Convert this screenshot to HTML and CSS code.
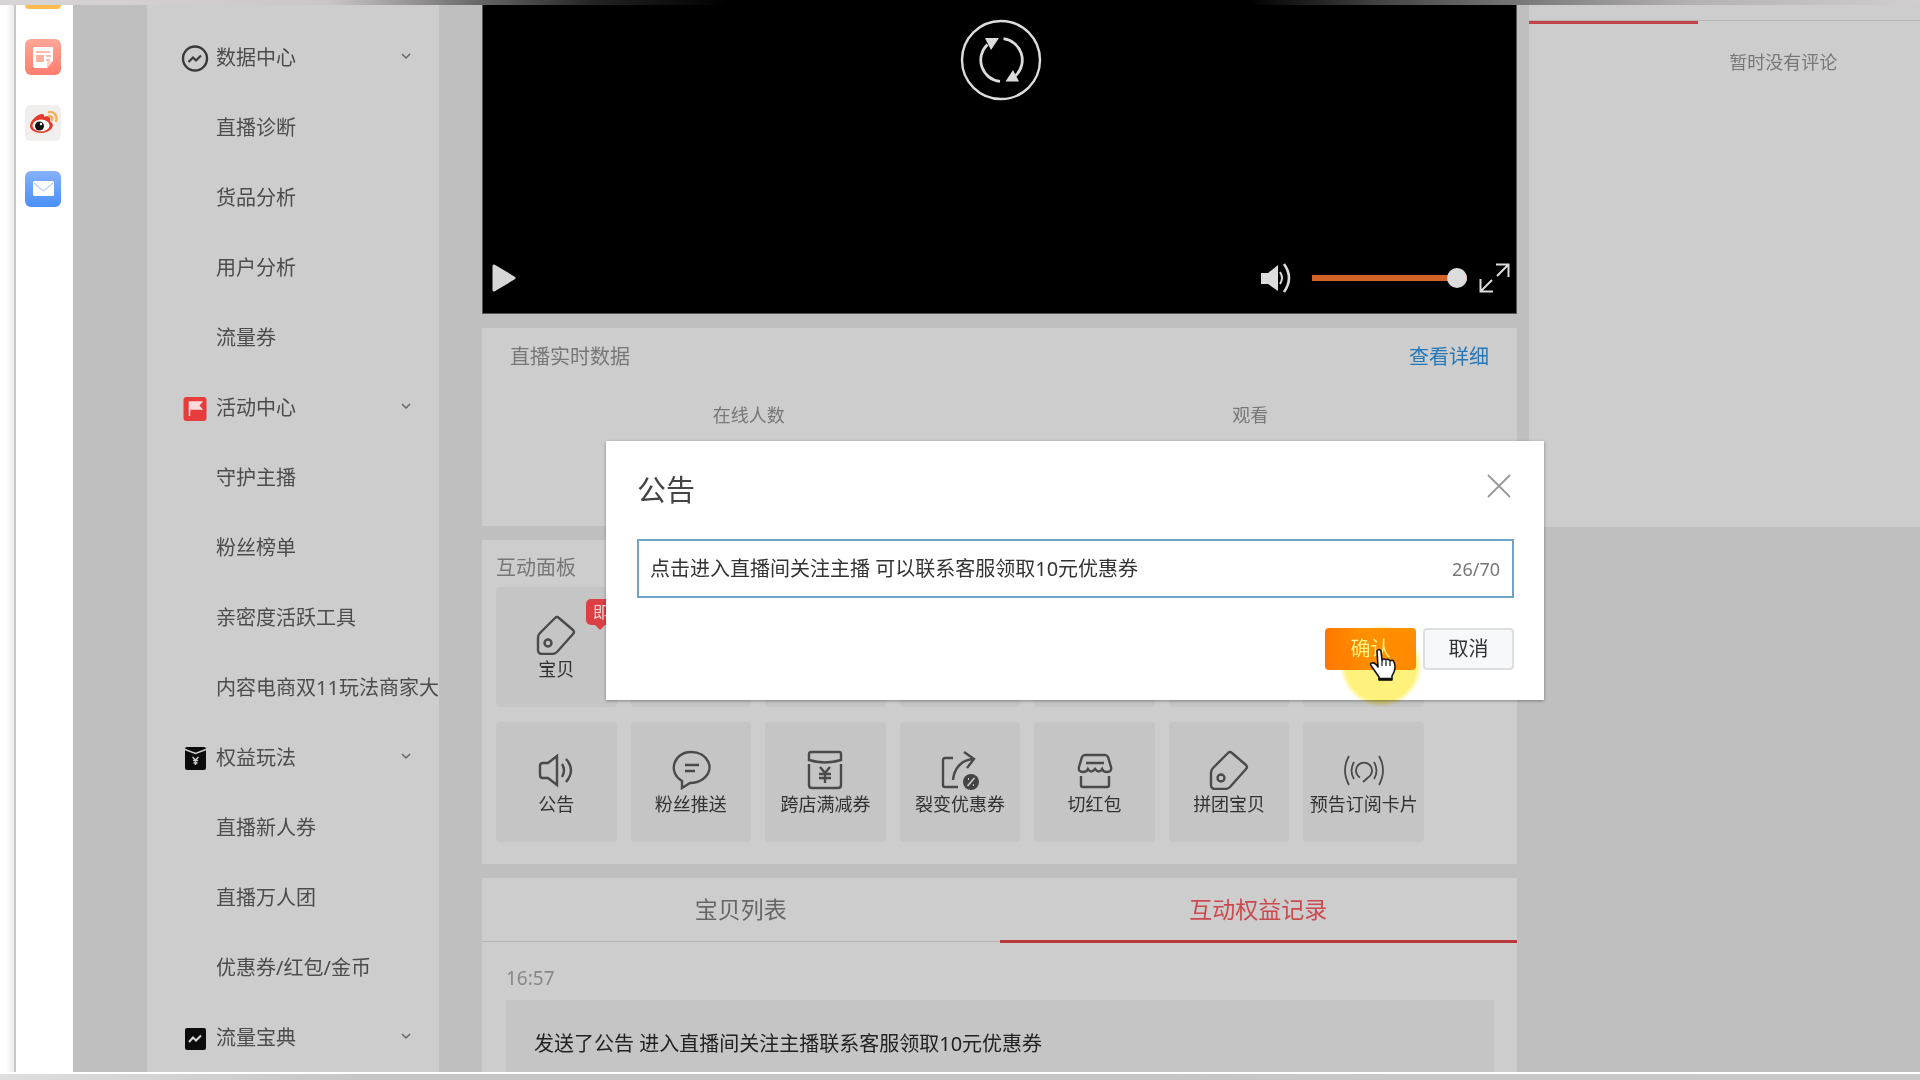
FILE: index.html
```html
<!DOCTYPE html>
<html lang="zh-CN">
<head>
<meta charset="utf-8">
<title>直播中控台</title>
<link rel="stylesheet" href="styles.css">
</head>
<body>
<div class="top-strip"></div>
<div class="shell">
  <div class="window-edge"></div>
  <aside class="rail">
    <a class="app app-cut" href="#" aria-label="应用"></a>
    <a class="app app-news" href="#" aria-label="资讯">
      <svg width="36" height="36" viewBox="0 0 36 36"><path d="M9 8h18q2 0 1 2v12l-6 7H10q-2 0-2-2V9z" fill="#fff"/><path d="M11 13h14M21 17h5M21 21h4" stroke="#ffa193" stroke-width="1.5"/><rect x="11" y="16" width="8" height="7" fill="#ffb0a2"/><path d="M28 22l-6 7v-5q0-2 2-2z" fill="#ffd2c8"/></svg>
    </a>
    <a class="app app-weibo" href="#" aria-label="微博">
      <svg width="36" height="36" viewBox="0 0 36 36"><path d="M5 21c0-5 7-12 12-12 3 0 2 3 2 3s5-2 6 1c1 2-1 3 1 4 5 4-1 11-10 11C10 28 5 25 5 21z" fill="#e43b2b"/><ellipse cx="16" cy="20.500" rx="8.500" ry="6" fill="#fff"/><circle cx="14.500" cy="21" r="4.500" fill="#111"/><circle cx="16" cy="19" r="1.200" fill="#fff"/><path d="M24 7c5-1 9 4 7 9M24 11c3 0 4 2 3 4" fill="none" stroke="#f3b057" stroke-width="2.400" stroke-linecap="round"/></svg>
    </a>
    <a class="app app-mail" href="#" aria-label="邮箱">
      <svg width="36" height="36" viewBox="0 0 36 36"><rect x="8" y="10" width="21" height="15" rx="1.500" fill="#fff"/><path d="M9 12l8 7q1.500 1 3 0l8-7" fill="none" stroke="#bcd3fb" stroke-width="1.500"/></svg>
    </a>
  </aside>
  <div class="workspace">
    <nav class="sidebar">
      <button class="group" type="button">
        <svg class="group-icon" viewBox="0 0 28 28"><circle cx="14" cy="14.500" r="12" fill="none" stroke="#3a3a3a" stroke-width="2.400"/><path d="M7.500 18l4.500-4.500 3 3 5-5" fill="none" stroke="#3a3a3a" stroke-width="2.200"/></svg>
        <span>数据中心</span>
        <svg class="chevron" viewBox="0 0 10 10"><path d="M1 1l4 4 4-4" fill="none" stroke="#666" stroke-width="1.500"/></svg>
      </button>
      <a class="item" href="#">直播诊断</a>
      <a class="item" href="#">货品分析</a>
      <a class="item" href="#">用户分析</a>
      <a class="item" href="#">流量券</a>
      <button class="group" type="button">
        <svg class="group-icon" viewBox="0 0 28 28"><rect x="2.500" y="3" width="23" height="24" rx="3" fill="#e63c3c"/><path d="M8.500 22V8h12l-3 3.500 3 3.500h-11" fill="#f6dcdc" stroke="#f6dcdc" stroke-width="1.500"/></svg>
        <span>活动中心</span>
        <svg class="chevron" viewBox="0 0 10 10"><path d="M1 1l4 4 4-4" fill="none" stroke="#666" stroke-width="1.500"/></svg>
      </button>
      <a class="item" href="#">守护主播</a>
      <a class="item" href="#">粉丝榜单</a>
      <a class="item" href="#">亲密度活跃工具</a>
      <a class="item" href="#">内容电商双11玩法商家大</a>
      <button class="group" type="button">
        <svg class="group-icon" viewBox="0 0 28 28"><rect x="4" y="3" width="21" height="23" rx="2" fill="#0c0c0c"/><path d="M4 5.500l10.500 4 10.500-4" fill="none" stroke="#cdcdcd" stroke-width="1.500"/><path d="M11.500 13l3 3 3-3M14.500 15v6M12 16.500h5M12.500 19h4" fill="none" stroke="#cdcdcd" stroke-width="1.400"/></svg>
        <span>权益玩法</span>
        <svg class="chevron" viewBox="0 0 10 10"><path d="M1 1l4 4 4-4" fill="none" stroke="#666" stroke-width="1.500"/></svg>
      </button>
      <a class="item" href="#">直播新人券</a>
      <a class="item" href="#">直播万人团</a>
      <a class="item" href="#">优惠券/红包/金币</a>
      <button class="group" type="button">
        <svg class="group-icon" viewBox="0 0 28 28"><rect x="4" y="4" width="21" height="22" rx="2" fill="#0c0c0c"/><path d="M8 18l4-4.500 3 3 5-5" fill="none" stroke="#d8d8d8" stroke-width="2"/></svg>
        <span>流量宝典</span>
        <svg class="chevron" viewBox="0 0 10 10"><path d="M1 1l4 4 4-4" fill="none" stroke="#666" stroke-width="1.500"/></svg>
      </button>
    </nav>

    <main class="main">
      <section class="player">
        <button class="reload" type="button" aria-label="刷新">
          <svg width="82" height="82" viewBox="0 0 82 82"><circle cx="41" cy="41" r="39" fill="none" stroke="#dcdcdc" stroke-width="2.400"/><path d="M43.500 19.700a21.500 21.500 0 0 1 12 37M40 62.400a21.500 21.500 0 0 1-12.500-37" fill="none" stroke="#dcdcdc" stroke-width="2.800"/><path d="M25 19h14l-8 12zM59 62.500H45.500L53 51z" fill="#dcdcdc"/></svg>
        </button>
        <div class="controls">
          <button type="button" aria-label="播放"><svg width="24" height="30" viewBox="0 0 24 30"><path d="M2 3v24l20-12z" fill="#d6d6d6" stroke="#d6d6d6" stroke-width="3" stroke-linejoin="round"/></svg></button>
          <button class="volume" type="button" aria-label="音量"><svg width="32" height="30" viewBox="0 0 32 30"><path d="M1 10h7L18 2v26l-10-7H1z" fill="#dcdcdc"/><path d="M20 9q4 6 0 12" fill="none" stroke="#dcdcdc" stroke-width="2"/><path d="M24 1q10 14 0 28" fill="none" stroke="#dcdcdc" stroke-width="2.600"/></svg></button>
          <input class="slider" type="range" min="0" max="100" value="100" aria-label="音量大小">
          <button type="button" aria-label="全屏"><svg width="31" height="30" viewBox="0 0 31 30"><path d="M17 1.500h12.500V14M29 2L18 13M1.500 16v12.500H14M2 28l11-11" fill="none" stroke="#dcdcdc" stroke-width="2"/></svg></button>
        </div>
      </section>

      <section class="card stats">
        <header class="stats-head">
          <h2>直播实时数据</h2>
          <a href="#">查看详细</a>
        </header>
        <div class="stats-grid">
          <span>在线人数</span>
          <span>观看</span>
        </div>
      </section>

      <section class="card panel">
        <h2>互动面板</h2>
        <div class="tiles">
          <button class="tile" type="button">
            <svg class="tile-icon" viewBox="0 0 40 40"><path d="M19 3q2-2 4 0l14 12q2 2 0 4L21 37q-2 2-5 2H6q-4 0-4-4V23q0-3 2-5z"/><circle cx="12" cy="28" r="3.500"/></svg>
            <span>宝贝</span>
            <em class="badge">即</em>
          </button>
          <div class="tile"></div><div class="tile"></div><div class="tile"></div><div class="tile"></div><div class="tile"></div><div class="tile"></div>
          <button class="tile" type="button">
            <svg class="tile-icon" viewBox="0 0 40 40"><path d="M21 6v29L12 28H7q-3 0-3-3v-9q0-3 3-3h5z"/><path d="M26 14q4 6 0 13M30 9q10 11 0 23"/></svg>
            <span>公告</span>
          </button>
          <button class="tile" type="button">
            <svg class="tile-icon" viewBox="0 0 40 40"><path d="M11 31C-4 22 3 2 20 2s25 17 12 27c-4 3-9 4-13 4l-8 5z"/><path d="M14 15h14M14 21h10"/></svg>
            <span>粉丝推送</span>
          </button>
          <button class="tile" type="button">
            <svg class="tile-icon" viewBox="0 0 40 40"><path d="M6 2h28q2 0 2 2v6q-16 5-32 0V4q0-2 2-2zM4 14v21q0 3 3 3h26q3 0 3-3V14"/><path d="M15 17l5 6 5-6M20 23v10M14 24h12M14 28h12"/></svg>
            <span>跨店满减券</span>
          </button>
          <button class="tile" type="button">
            <svg class="tile-icon" viewBox="0 0 40 40"><path d="M13 8H5q-2 0-2 2v25q0 2 2 2h13M13 30C14 20 20 10 33 9M24 2l10 7-7 9"/><circle cx="31" cy="32" r="8" fill="#444" stroke="none"/><path d="M27.500 36l7-8M28 29h1M33 35h1" stroke="#c8c8c8" stroke-width="1.800"/></svg>
            <span>裂变优惠券</span>
          </button>
          <button class="tile" type="button">
            <svg class="tile-icon" viewBox="0 0 40 40"><path d="M10 5h20q2 0 3 2l3 10q1 5-4 5-4 0-5-3-3 5-7 0-4 5-7 0-1 3-5 3-5 0-4-5L7 7q1-2 3-2zM11 13h18M6 26v9q0 2 2 2h24q2 0 2-2v-9"/></svg>
            <span>切红包</span>
          </button>
          <button class="tile" type="button">
            <svg class="tile-icon" viewBox="0 0 40 40"><path d="M19 3q2-2 4 0l14 12q2 2 0 4L21 37q-2 2-5 2H6q-4 0-4-4V23q0-3 2-5z"/><circle cx="12" cy="28" r="3.500"/></svg>
            <span>拼团宝贝</span>
          </button>
          <button class="tile" type="button">
            <svg class="tile-icon tile-icon-thin" viewBox="0 0 40 40"><path d="M16 27.500a8 8 0 1 1 8 0L19 32M10 12q-5 9 0 17M30 12q5 9 0 17M5 6q-8 14 0 29M35 6q8 14 0 29"/></svg>
            <span>预告订阅卡片</span>
          </button>
        </div>
      </section>

      <section class="card record">
        <div class="tabs">
          <button class="tab" type="button">宝贝列表</button>
          <button class="tab tab-active" type="button">互动权益记录</button>
        </div>
        <div class="log">
          <time>16:57</time>
          <p>发送了公告 进入直播间关注主播联系客服领取10元优惠券</p>
        </div>
      </section>
    </main>

    <aside class="side">
      <div class="comments">
        <div class="comment-tabs"></div>
        <p>暂时没有评论</p>
      </div>
    </aside>
  </div>
</div>
<div class="bottom-strip"></div>

<form class="dialog" role="dialog" aria-labelledby="dialog-title">
  <header class="dialog-head">
    <h1 id="dialog-title">公告</h1>
    <button class="close" type="button" aria-label="关闭"><svg width="24" height="24" viewBox="0 0 24 24"><path d="M1 1l22 22M23 1L1 23" stroke="#999" stroke-width="1.800"/></svg></button>
  </header>
  <div class="field">
    <input type="text" aria-label="公告内容" maxlength="70" value="点击进入直播间关注主播 可以联系客服领取10元优惠券">
    <span>26/70</span>
  </div>
  <footer class="dialog-foot">
    <button class="btn btn-primary" type="button">确认</button>
    <button class="btn" type="button">取消</button>
  </footer>
  <div class="halo"></div>
  <svg class="cursor" width="28" height="34" viewBox="0 0 28 34"><path d="M8 3q2-3 4 0l1 9q2-2 4 0 2-2 4 1 3-2 4 1 2 5 0 10l-2 4v4H10v-3L3 19q-3-4 0-4 3-1 6 4z" fill="#fff" stroke="#111" stroke-width="1.600" stroke-linejoin="round"/><path d="M13 12v6M17 13v5M21 14v4" stroke="#111" stroke-width="1.200"/><path d="M10 31h13" stroke="#111" stroke-width="2.500"/></svg>
</form>
</body>
</html>
```
FILE: styles.css
```css
* {
  box-sizing: border-box;
}

body {
  margin: 0;
  height: 100vh;
  display: flex;
  flex-direction: column;
  position: relative;
  overflow: hidden;
  background: #bfbfbf;
  color: #4c4c4c;
  font-family: "Noto Sans", "Noto Sans CJK SC", sans-serif;
  font-size: 20px;
  line-height: 28px;
}

h1, h2, p {
  margin: 0;
  font-weight: 400;
}

a {
  color: inherit;
  text-decoration: none;
}

button {
  border: 0;
  padding: 0;
  background: none;
  color: inherit;
  font: inherit;
}

svg {
  display: block;
  flex: none;
}

.top-strip {
  flex: none;
  height: 5px;
  background: linear-gradient(90deg, #d8d5d6 0%, #cbc7c8 17%, #8f8d8d 22%, #666 25%, #222 31%, #000 38%, #000 65%, #444 72%, #777 79%, #b4b1b2 88%, #d0cecf 100%);
}

.bottom-strip {
  flex: none;
  height: 8px;
  border-top: 2px solid #fff;
  background: linear-gradient(90deg, #dedede, #c4c4c4 20%, #c8c8c8);
}

.shell {
  flex: 1;
  min-height: 0;
  display: flex;
}

.window-edge {
  flex: none;
  width: 16px;
  border-right: 2px solid #c8c8c8;
  background: linear-gradient(90deg, #fff 40%, #ececec);
}

.rail {
  flex: none;
  width: 57px;
  padding-left: 9px;
  display: flex;
  flex-direction: column;
  gap: 30px;
  background: #fff;
}

.app {
  width: 36px;
  height: 36px;
  border-radius: 6px;
}

.app-cut {
  height: 4px;
  border-radius: 0 0 6px 6px;
  background: #ffbb4d;
}

.app-news {
  background: linear-gradient(#ffa697, #ff7d6e);
}

.app-weibo {
  background: #f1efee;
}

.app-mail {
  background: linear-gradient(#86b1fa, #4890f8);
}

.workspace {
  flex: 1;
  min-width: 0;
  display: flex;
  padding-left: 74px;
  overflow: hidden;
}

.sidebar {
  flex: none;
  width: 292px;
  margin-right: 43px;
  padding-top: 18px;
  display: flex;
  flex-direction: column;
  overflow: hidden;
  background: #cdcdcd;
}

.group,
.item {
  flex: none;
  height: 70px;
  display: flex;
  align-items: center;
  white-space: nowrap;
}

.group {
  gap: 7px;
  padding: 0 28px 0 34px;
}

.item {
  padding-left: 69px;
}

.group-icon {
  width: 28px;
  height: 28px;
}

.chevron {
  width: 10px;
  height: 10px;
  margin-left: auto;
}

.main {
  flex: 1035 1 0;
  min-width: 0;
  display: flex;
  flex-direction: column;
  gap: 14px;
}

.player {
  flex: none;
  height: 309px;
  padding: 14px 6px 19px 9px;
  display: flex;
  flex-direction: column;
  justify-content: space-between;
  border: 1px solid #555;
  border-top: 0;
  background: #000;
}

.reload {
  align-self: center;
}

.controls {
  display: flex;
  align-items: center;
  height: 32px;
  gap: 12px;
}

.volume {
  margin-left: auto;
  margin-right: 8px;
}

.slider {
  appearance: none;
  width: 155px;
  height: 20px;
  margin: 0;
  background: linear-gradient(#d2642a, #d2642a) center / 100% 6px no-repeat;
}

.slider::-webkit-slider-thumb {
  appearance: none;
  width: 20px;
  height: 20px;
  border-radius: 50%;
  background: #dcdcdc;
}

.card {
  flex: none;
  background: #cdcdcd;
}

.card h2 {
  font-size: 20px;
  color: #777;
}

.stats {
  height: 198px;
  padding-top: 15px;
}

.stats-head {
  display: flex;
  justify-content: space-between;
  padding: 0 28px;
}

.stats-head a {
  color: #2478ba;
}

.stats-grid {
  display: grid;
  grid-template-columns: 1fr 1fr;
  padding: 30px 16px 0;
  text-align: center;
  font-size: 18px;
  color: #777;
}

.panel {
  padding: 14px 93px 22px 14px;
}

.panel h2 {
  margin-bottom: 5px;
}

.tiles {
  display: grid;
  grid-template-columns: repeat(7, 1fr);
  gap: 15px 14px;
}

.tile {
  position: relative;
  height: 120px;
  padding-top: 28px;
  display: flex;
  flex-direction: column;
  align-items: center;
  gap: 1px;
  border-radius: 4px;
  background: #c5c5c5;
  color: #333;
  font-size: 18px;
  line-height: 26px;
  white-space: nowrap;
}

.tile-icon {
  width: 40px;
  height: 40px;
  fill: none;
  stroke: #4a4a4a;
  stroke-width: 2.4;
}

.tile-icon-thin {
  stroke-width: 1.8;
}

.badge {
  position: absolute;
  top: 12px;
  left: 90px;
  width: 36px;
  height: 26px;
  padding-left: 7px;
  border-radius: 5px;
  background: #dc3f44;
  color: #f3d6d6;
  font-size: 16px;
  font-style: normal;
  text-align: left;
}

.badge::after {
  content: "";
  position: absolute;
  left: 8px;
  top: 25px;
  border: 6px solid transparent;
  border-top-color: #dc3f44;
  border-bottom: 0;
}

.record {
  flex: 1;
  min-height: 0;
  overflow: hidden;
}

.tabs {
  display: grid;
  grid-template-columns: 1fr 1fr;
  height: 64px;
  border-bottom: 1px solid #b4b4b4;
}

.tab {
  height: 65px;
  padding-bottom: 3px;
  font-size: 23px;
  color: #666;
}

.tab-active {
  padding-bottom: 0;
  border-bottom: 3px solid #b8383c;
  color: #cb4a50;
}

.log {
  padding: 21px 23px 0 24px;
}

.log time {
  display: block;
  height: 37px;
  font-size: 19px;
  line-height: 30px;
  color: #888;
}

.log p {
  padding: 30px 28px;
  background: #c5c5c5;
  color: #222;
}

.side {
  flex: 391 1 0;
  min-width: 0;
  margin-left: 12px;
}

.comments {
  width: 130%;
  height: 522px;
  background: #cdcdcd;
  color: #777;
  font-size: 18px;
  text-align: center;
}

.comment-tabs {
  height: 16px;
  margin-bottom: 27px;
  border-bottom: 1px solid #b4b4b4;
}

.comment-tabs::before {
  content: "";
  display: block;
  width: 33.3%;
  height: 16px;
  border-bottom: 3px solid #c0444a;
}

.dialog {
  position: absolute;
  left: 606px;
  top: 441px;
  width: 938px;
  padding: 30px 30px 30px 31px;
  background: #fff;
  box-shadow: 0 1px 3px rgba(0, 0, 0, 0.35);
}

.dialog-head {
  display: flex;
  justify-content: space-between;
  height: 68px;
}

.dialog-head h1 {
  font-size: 29px;
  line-height: 38px;
  color: #444;
}

.close {
  align-self: flex-start;
  padding: 3px;
}

.field {
  display: flex;
  align-items: center;
  height: 59px;
  padding: 0 12px 0 11px;
  border: 2px solid #6fa3c8;
}

.field input {
  flex: 1;
  min-width: 0;
  border: 0;
  padding: 0;
  outline: 0;
  background: none;
  color: #333;
  font: inherit;
}

.field span {
  font-size: 18px;
  color: #777;
}

.dialog-foot {
  display: flex;
  justify-content: flex-end;
  gap: 7px;
  padding-top: 30px;
}

.btn {
  width: 91px;
  height: 42px;
  border: 2px solid #dcdee0;
  border-radius: 4px;
  background: #f7f8fa;
  color: #333;
}

.btn-primary {
  border: 0;
  background: linear-gradient(90deg, #ff7600, #ff9800 50%, #ff8f00);
  color: #fff;
}

.halo {
  position: absolute;
  right: 122px;
  top: 184px;
  width: 82px;
  height: 82px;
  border-radius: 50%;
  background: radial-gradient(circle closest-side, #fff27c 86%, rgba(255, 242, 124, 0));
  mix-blend-mode: multiply;
}

.cursor {
  position: absolute;
  right: 147px;
  top: 207px;
}
```
